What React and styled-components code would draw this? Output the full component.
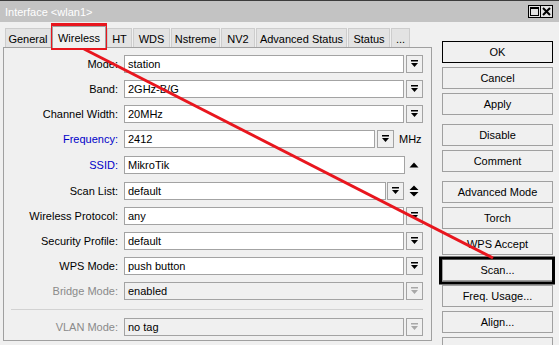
import React from "react";
import styled, { createGlobalStyle } from "styled-components";

const GlobalStyle = createGlobalStyle`
  body {
    margin: 0;
    font-family: "Liberation Sans", Arial, sans-serif;
    font-size: 11px;
    background: #f0f0f0;
  }
`;

const Window = styled.div`
  position: relative;
  width: 559px;
  height: 345px;
  background: #f0f0f0;
  overflow: hidden;
  color: #000;
`;

const TitleBar = styled.div`
  height: 21px;
  border-top: 1px solid #3c3c3c;
  background: #c3c3c3;
  color: #fff;
  display: flex;
  align-items: center;
  justify-content: space-between;
  padding: 0 6px 0 5px;
`;

const Controls = styled.div`
  display: flex;
`;

const CtrlBox = styled.div`
  width: 13px;
  height: 13px;
  box-sizing: border-box;
  border: 1px solid #000;
  margin-left: -1px;
  background: #e2e2e2;
  display: flex;
  align-items: center;
  justify-content: center;
`;

const Main = styled.div`
  display: flex;
  align-items: flex-start;
`;

const LeftPane = styled.div`
  margin-left: 3px;
  width: 429px;
`;

const TabStrip = styled.div`
  height: 25px;
  display: flex;
  align-items: flex-end;
  gap: 1px;
  padding-left: 2px;
`;

const Tab = styled.div`
  box-sizing: border-box;
  width: ${(p) => p.$w}px;
  height: ${(p) => (p.$active ? 22 : 19)}px;
  margin-bottom: ${(p) => (p.$active ? -1 : 0)}px;
  position: relative;
  z-index: ${(p) => (p.$active ? 1 : 0)};
  background: ${(p) => (p.$active ? "#f0f0f0" : "#e3e3e3")};
  border: 1px solid ${(p) => (p.$active ? "#a0a0a0" : "#cdcdcd")};
  border-bottom: none;
  display: flex;
  align-items: center;
  justify-content: center;
  padding-top: ${(p) => (p.$active ? 0 : 1)}px;
  white-space: nowrap;
`;

const Panel = styled.div`
  box-sizing: border-box;
  height: 294px;
  border: 1px solid #a0a0a0;
  padding: 7px 8px 0 0;
`;

const Row = styled.div`
  display: flex;
  align-items: center;
  height: 18px;
  margin-top: ${(p) => p.$mt}px;
`;

const Label = styled.div`
  width: 114px;
  margin-right: 6px;
  text-align: right;
  white-space: nowrap;
  color: ${(p) => p.$color || "#000"};
`;

const Field = styled.div`
  flex: 1;
  box-sizing: border-box;
  height: 18px;
  border: 1px solid #a3a3a3;
  background: ${(p) => (p.$disabled ? "#f0f0f0" : "#fff")};
  padding-left: 3px;
  display: flex;
  align-items: center;
`;

const DropButton = styled.div`
  box-sizing: border-box;
  width: 17px;
  height: 18px;
  margin-left: ${(p) => p.$ml ?? 2}px;
  border: 1px solid #a3a3a3;
  background: #f0f0f0;
  display: flex;
  align-items: center;
  justify-content: center;
  color: ${(p) => (p.$disabled ? "#a8a8a8" : "#000")};
`;

const Slot = styled.div`
  width: ${(p) => p.$w}px;
  display: flex;
  align-items: center;
  justify-content: center;
`;

const Unit = styled.div`
  width: 24px;
  margin-left: 5px;
`;

const Separator = styled.div`
  height: 1px;
  margin: 9px 0 0 7px;
  background: #d2d2d2;
`;

const ButtonColumn = styled.div`
  margin-left: 10px;
  padding-top: 19px;
  width: 111px;
  display: flex;
  flex-direction: column;
  gap: 4px;
`;

const Button = styled.div`
  box-sizing: border-box;
  height: 22px;
  flex-shrink: 0;
  margin-top: ${(p) => (p.$group ? 5 : 0)}px;
  border: 1px solid ${(p) => (p.$default ? "#000" : "#a0a0a0")};
  background: #f0f0f0;
  display: flex;
  align-items: center;
  justify-content: center;
  white-space: nowrap;
`;

const Overlay = styled.svg`
  position: absolute;
  left: 0;
  top: 0;
  pointer-events: none;
`;

const DropIcon = () => (
  <svg width="9" height="8" viewBox="0 0 9 8">
    <rect x="1" y="0" width="7" height="1.5" fill="currentColor" />
    <path d="M1 3h7l-3.5 4z" fill="currentColor" />
  </svg>
);

const UpIcon = () => (
  <svg width="10" height="6" viewBox="0 0 10 6">
    <path d="M0.5 5.5h9L5 0.5z" fill="#000" />
  </svg>
);

const UpDownIcon = () => (
  <svg width="10" height="12" viewBox="0 0 10 12">
    <path d="M0.5 5h9L5 0.5z M0.5 7h9L5 11.5z" fill="#000" />
  </svg>
);

const tabs = [
  ["General", 46],
  ["Wireless", 54, true],
  ["HT", 25],
  ["WDS", 37],
  ["Nstreme", 49],
  ["NV2", 34],
  ["Advanced Status", 91],
  ["Status", 42],
  ["...", 19],
];

// last entry is only the top edge of the next button, cut by the window
const buttons = [
  ["OK", false, true],
  ["Cancel"],
  ["Apply"],
  ["Disable", true],
  ["Comment"],
  ["Advanced Mode", true],
  ["Torch"],
  ["WPS Accept"],
  ["Scan..."],
  ["Freq. Usage..."],
  ["Align..."],
  [""],
];

const DropRow = ({ label, value, color, mt = 7, disabled }) => (
  <Row $mt={mt}>
    <Label $color={color}>{label}:</Label>
    <Field $disabled={disabled}>{value}</Field>
    <DropButton $disabled={disabled}>
      <DropIcon />
    </DropButton>
  </Row>
);

export default function App() {
  return (
    <>
      <GlobalStyle />
      <Window>
        <TitleBar>
          <span>Interface &lt;wlan1&gt;</span>
          <Controls>
            <CtrlBox>
              <svg width="9" height="9" viewBox="0 0 9 9">
                <rect x="0.5" y="0.5" width="8" height="8" fill="none" stroke="#000" />
                <rect x="0" y="0" width="9" height="2" fill="#000" />
              </svg>
            </CtrlBox>
            <CtrlBox>
              <svg width="9" height="9" viewBox="0 0 9 9">
                <path d="M1 1l7 7M8 1l-7 7" stroke="#000" strokeWidth="2" />
              </svg>
            </CtrlBox>
          </Controls>
        </TitleBar>
        <Main>
          <LeftPane>
            <TabStrip>
              {tabs.map(([name, w, active]) => (
                <Tab key={name} $w={w} $active={active}>
                  {name}
                </Tab>
              ))}
            </TabStrip>
            <Panel>
              <DropRow label="Mode" value="station" mt={0} />
              <DropRow label="Band" value="2GHz-B/G" />
              <DropRow label="Channel Width" value="20MHz" />
              <Row $mt={7}>
                <Label $color="#0000c8">Frequency:</Label>
                <Field>2412</Field>
                <DropButton>
                  <DropIcon />
                </DropButton>
                <Unit>MHz</Unit>
              </Row>
              <Row $mt={8}>
                <Label $color="#0000c8">SSID:</Label>
                <Field>MikroTik</Field>
                <Slot $w={18}>
                  <UpIcon />
                </Slot>
              </Row>
              <Row $mt={8}>
                <Label>Scan List:</Label>
                <Field>default</Field>
                <DropButton $ml={1}>
                  <DropIcon />
                </DropButton>
                <Slot $w={19}>
                  <UpDownIcon />
                </Slot>
              </Row>
              <DropRow label="Wireless Protocol" value="any" />
              <DropRow label="Security Profile" value="default" />
              <DropRow label="WPS Mode" value="push button" />
              <DropRow label="Bridge Mode" value="enabled" color="#8a8a8a" disabled />
              <Separator />
              <DropRow label="VLAN Mode" value="no tag" color="#8a8a8a" mt={8} disabled />
            </Panel>
          </LeftPane>
          <ButtonColumn>
            {buttons.map(([name, group, def], i) => (
              <Button key={i} $group={group} $default={def}>
                {name}
              </Button>
            ))}
          </ButtonColumn>
        </Main>
        <Overlay width="559" height="345" viewBox="0 0 559 345">
          <rect x="52.5" y="24.5" width="53" height="24" fill="none" stroke="#e8161e" strokeWidth="3" />
          <rect x="440.5" y="258" width="113" height="25" fill="none" stroke="#000" strokeWidth="3" />
          <line x1="84" y1="49" x2="493" y2="258" stroke="#e8161e" strokeWidth="3" />
        </Overlay>
      </Window>
    </>
  );
}
